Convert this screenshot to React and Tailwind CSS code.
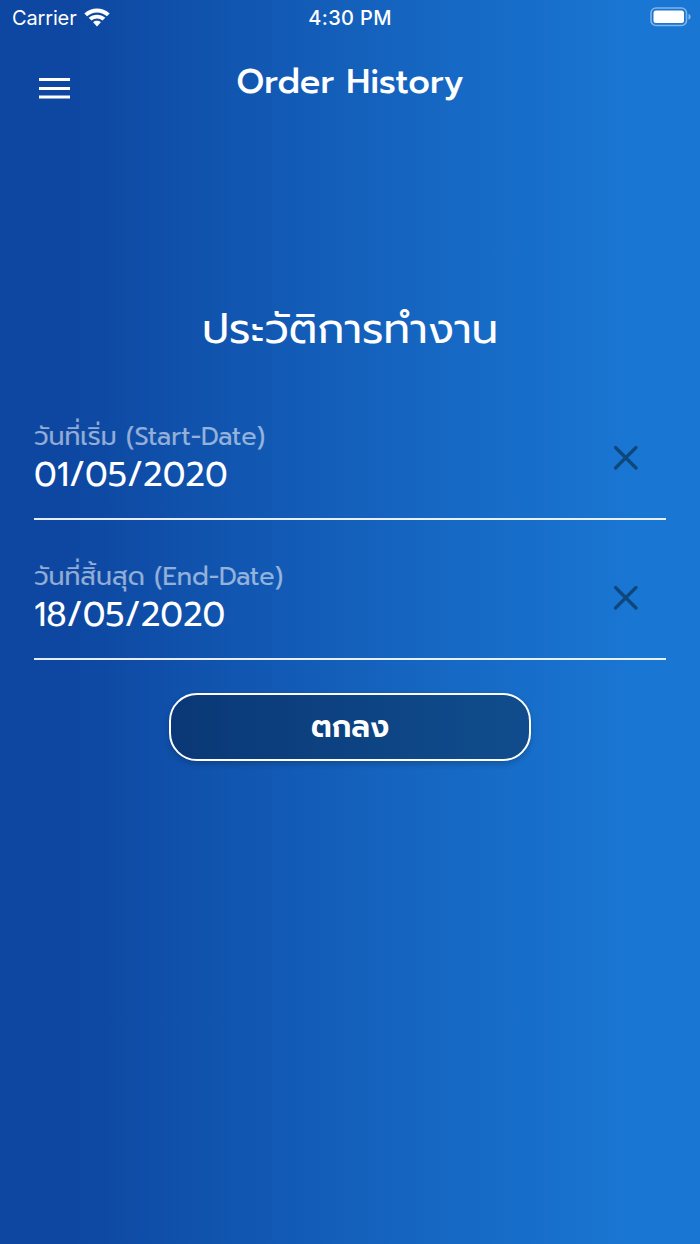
import React from "react";

function StatusBar() {
  return (
    <div className="flex h-9 items-center justify-between px-3 font-['Inter','Liberation_Sans',sans-serif] text-[20px] leading-9">
      <div className="flex flex-1 items-center gap-2">
        <span className="tracking-[-0.15px]">Carrier</span>
        <svg width="26" height="20" viewBox="0 0 26 20" className="-ml-px">
          <path d="M.3 5.400C7.500-1 18.500-1 25.700 5.400L22.900 8.300C17.200 3.100 8.800 3.100 3.100 8.300z" fill="white" />
          <path d="M4.700 9.800C9.500 5.600 16.500 5.600 21.300 9.800L18.500 12.600C15.200 9.800 10.800 9.800 7.500 12.600z" fill="white" />
          <path d="M9.100 14.200C11.300 12.300 14.700 12.300 16.900 14.200L13 18.400z" fill="white" />
        </svg>
      </div>
      <span className="font-medium tracking-[0.35px]">4:30 PM</span>
      <div className="flex flex-1 justify-end">
        <svg width="42" height="20" viewBox="0 0 42 20" fill="none" className="-mr-1 -mt-0.5">
          <rect x="1" y="1" width="35.5" height="17.5" rx="5" stroke="white" strokeOpacity=".45" strokeWidth="1.6" />
          <rect x="3.500" y="3.500" width="30.500" height="12.500" rx="2.500" fill="white" />
          <path d="M38.500 7c2.800.7 2.800 5 0 5.700z" fill="white" fillOpacity=".5" />
        </svg>
      </div>
    </div>
  );
}

function DateField({ label, value }) {
  return (
    <div className="flex h-[140px] flex-col border-b-2 border-white/90">
      <div className="flex flex-1 items-start justify-between">
        <div className="pt-[38px]">
          <div className="h-[38px] whitespace-nowrap text-[25.3px] leading-[38px] text-white/55">{label}</div>
          <div className="h-[38px] whitespace-nowrap text-[33.75px] leading-[38px]">{value}</div>
        </div>
        <svg width="24" height="24" viewBox="0 0 24 24" className="mr-7 mt-[66px]">
          <path d="M1.500 1.500l20.500 20.500m0-20.500l-20.500 20.500" stroke="#0d477c" strokeWidth="3.200" strokeLinecap="round" />
        </svg>
      </div>
    </div>
  );
}

export default function App() {
  return (
    <main className="flex h-[1244px] w-[700px] flex-col overflow-hidden bg-[linear-gradient(90deg,#0d47a1_10%,#1565c0_58%,#1976d2_90%)] font-['Prompt','Montserrat','Noto_Sans_Thai','Lato',sans-serif] text-white">
      <StatusBar />
      <header className="grid h-[100px] grid-cols-[70px_1fr_70px] px-[39px]">
        <svg width="31" height="21" viewBox="0 0 31 21" className="mt-[42px]">
          <path d="M0 1.500h31M0 10.500h31M0 19h31" stroke="white" strokeWidth="3.200" />
        </svg>
        <h1 className="mt-[23px] whitespace-nowrap text-center text-[33.75px] font-medium leading-[46px]">Order History</h1>
      </header>
      <h2 className="mt-[163px] whitespace-nowrap text-center text-[42.200px] leading-[60px]">ประวัติการทำงาน</h2>
      <section className="mt-[21px] px-[34px]">
        <DateField label="วันที่เริ่ม (Start-Date)" value="01/05/2020" />
        <DateField label="วันที่สิ้นสุด (End-Date)" value="18/05/2020" />
      </section>
      <button className="mx-auto mt-[33px] h-[67.5px] w-[362px] rounded-[28px] border-2 border-white bg-black/30 pt-0.5 text-[30px] font-semibold shadow-[0_3px_6px_rgba(0,0,0,0.2)]">ตกลง</button>
    </main>
  );
}
